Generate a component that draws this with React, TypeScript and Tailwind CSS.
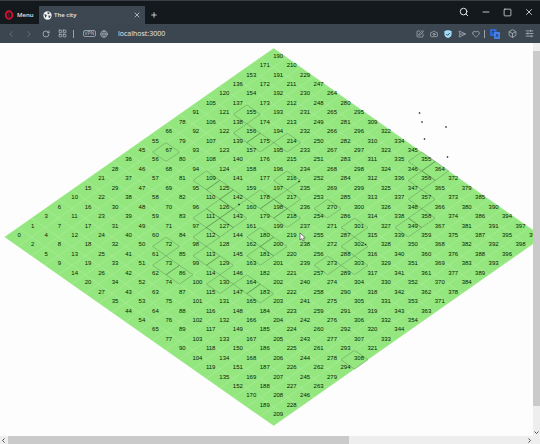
import type { ReactNode } from "react";
import {
  Box,
  Camera,
  ChevronLeft,
  ChevronRight,
  Globe,
  Heart,
  LayoutGrid,
  Minus,
  Plus,
  RotateCw,
  Search,
  SendHorizontal,
  SlidersHorizontal,
  Square,
  SquarePen,
  X,
} from "lucide-react";

const GRID = 20;
const HALF_W = 13.46;
const HALF_H = 9.44;
const ORIGIN_X = 4.5;
const ORIGIN_Y = 194;

type Tile = { id: number; x: number; y: number };

function buildTiles(): Tile[] {
  const tiles: Tile[] = [];
  let id = 0;
  for (let column = 0; column < GRID * 2 - 1; column++) {
    const count = Math.min(column + 1, GRID * 2 - 1 - column);
    for (let row = 0; row < count; row++) {
      tiles.push({
        id: id++,
        x: ORIGIN_X + HALF_W * (column + 1),
        y: ORIGIN_Y + (2 * row - (count - 1)) * HALF_H,
      });
    }
  }
  return tiles;
}

const TILES = buildTiles();

const BUILDINGS = new Set([
  67, 72, 73, 86, 109, 111, 112, 113, 125, 126, 127, 129, 130, 142, 143, 155,
  156, 164, 175, 178, 180, 181, 183, 198, 200, 214, 216, 217, 218, 270, 273,
  301, 302, 303, 308, 349, 355, 356, 357, 358, 364,
]);

const PEOPLE = [
  [419.5, 70],
  [422, 79],
  [446, 84],
  [424.5, 96],
  [447.5, 114],
  [299, 138.5],
  [239, 161.5],
  [365.5, 201.5],
];

function diamond(x: number, y: number) {
  return `M${x - HALF_W} ${y}L${x} ${y - HALF_H}L${x + HALF_W} ${y}L${x} ${y + HALF_H}Z`;
}

function City() {
  const w = HALF_W * GRID;
  const h = HALF_H * GRID;
  return (
    <svg
      className="block h-[390px] w-[560px] max-w-none shrink-0"
      viewBox="0 0 560 390"
      role="img"
      aria-label="City map"
    >
      <path
        d={`M${ORIGIN_X} ${ORIGIN_Y}l${w} ${-h}l${w} ${h}l${-w} ${h}z`}
        fill="#94e77f"
      />
      {TILES.map((t) => (
        <path
          key={t.id}
          d={diamond(t.x, t.y)}
          fill="none"
          stroke="#c4f0b4"
          strokeWidth="0.4"
          strokeOpacity="0.5"
        />
      ))}
      {TILES.filter((t) => BUILDINGS.has(t.id)).map((t) => (
        <path
          key={t.id}
          d={diamond(t.x, t.y)}
          fill="none"
          stroke="#4c8742"
          strokeWidth="0.6"
          strokeOpacity="0.8"
        />
      ))}
      <g
        fontFamily="'Liberation Sans', Arial, sans-serif"
        fontSize="6"
        fill="#0a1c06"
      >
        {TILES.map((t) => (
          <text key={t.id} x={t.x - 0.5} y={t.y}>
            {t.id}
          </text>
        ))}
      </g>
      {PEOPLE.map(([x, y]) => (
        <rect key={`${x}-${y}`} x={x - 0.7} y={y - 0.7} width="1.4" height="1.4" fill="#111" />
      ))}
      <path
        d="M300 190v7l1.8-1.4 1.2 2.4 1.4-.7-1.2-2.2 2-.4z"
        fill="#fff"
        stroke="#333"
        strokeWidth="0.6"
      />
    </svg>
  );
}

function IconButton({ label, children }: { label: string; children: ReactNode }) {
  return (
    <button type="button" aria-label={label} className="flex shrink-0 items-center justify-center">
      {children}
    </button>
  );
}

function TitleBar() {
  return (
    <header className="flex h-6 shrink-0 items-end border-t border-[#3b3e42] bg-[#14191d] text-[#e4e7ea]">
      <button type="button" className="flex h-[18px] w-[39px] shrink-0 items-center gap-[3px] pl-1 text-[6px] font-semibold">
        <svg viewBox="0 0 10 10" className="size-[10px] shrink-0" aria-hidden="true">
          <ellipse cx="5" cy="5" rx="3.3" ry="3.9" fill="none" stroke="#e01035" strokeWidth="1.7" />
          <path d="M5 1.2v7.6" stroke="#8f1028" strokeWidth="1.1" />
        </svg>
        Menu
      </button>
      <div className="flex h-[18px] w-[106px] shrink-0 items-center gap-[2px] bg-[#3c4751] pr-1 pl-1">
        <svg viewBox="0 0 10 10" className="size-[9px] shrink-0" aria-hidden="true">
          <circle cx="5" cy="5" r="4.6" fill="#f3f5f6" />
          <path d="M1.4 3.6l2 .4 1 1.2-1 1.2-.6 1.5zM5 1.2l2.6.8-.8 1.4-1.6.2zM6 5l2.6.4-1.2 2.4-1.2-.6z" fill="#3c4751" />
        </svg>
        <span className="flex-1 text-[6px] font-semibold">The city</span>
        <IconButton label="Close tab"><X size={8} strokeWidth={2} /></IconButton>
      </div>
      <div className="flex h-[18px] w-[17px] items-center justify-center">
        <IconButton label="New tab"><Plus size={8} strokeWidth={2.5} /></IconButton>
      </div>
      <div className="mb-[7px] ml-auto flex items-end gap-3 pr-[6px]">
        <IconButton label="Search tabs"><Search size={10} strokeWidth={2.3} /></IconButton>
        <button type="button" aria-label="Minimize" className="flex h-3 items-end">
          <Minus size={10} strokeWidth={2} />
        </button>
        <IconButton label="Maximize"><Square size={9} strokeWidth={2} /></IconButton>
        <IconButton label="Close window"><X size={10} strokeWidth={2} /></IconButton>
      </div>
    </header>
  );
}

function AddressBar() {
  return (
    <nav className="flex h-[19px] shrink-0 items-center bg-[#3b4650] px-[6px] text-[#b9c0c6]">
      <div className="flex items-center gap-2">
        <span className="text-[#6d7780]"><IconButton label="Back"><ChevronLeft size={10} /></IconButton></span>
        <span className="text-[#6d7780]"><IconButton label="Forward"><ChevronRight size={10} /></IconButton></span>
        <IconButton label="Reload"><RotateCw size={8} strokeWidth={2.3} /></IconButton>
        <IconButton label="Speed dial"><LayoutGrid size={9} strokeWidth={2} /></IconButton>
      </div>
      <span className="ml-[6px] h-2 w-px bg-[#9aa2a9]" />
      <button type="button" className="ml-[9px] flex h-[7px] w-[13px] items-center justify-center rounded-xs border border-[#929ba2] text-[5px]">
        VPN
      </button>
      <Globe size={8} strokeWidth={2} className="ml-1 shrink-0" />
      <input
        aria-label="Address"
        defaultValue="localhost:3000"
        className="ml-[10px] min-w-0 flex-1 bg-transparent text-[7px] leading-3 font-medium text-[#e6e9ec] outline-none"
      />
      <div className="flex items-center gap-[6px]">
        <IconButton label="Edit page"><SquarePen size={8} strokeWidth={2} /></IconButton>
        <IconButton label="Snapshot"><Camera size={8} strokeWidth={2} /></IconButton>
        <IconButton label="Ad blocker">
          <svg viewBox="0 0 8 8" className="size-2">
            <path d="M4 0l3.6 1v3.2C7.6 6.2 6 7.5 4 8 2 7.5.4 6.2.4 4.2V1z" fill="#9fdcf7" />
            <path d="M2.3 4l1.3 1.3L5.8 3" fill="none" stroke="#3b4650" strokeWidth="1" />
          </svg>
        </IconButton>
        <IconButton label="My Flow"><SendHorizontal size={8} strokeWidth={2} /></IconButton>
        <IconButton label="Bookmark"><Heart size={8} strokeWidth={2} /></IconButton>
      </div>
      <span className="ml-1 h-2 w-px bg-[#9aa2a9]" />
      <div className="ml-[5px] flex items-center gap-2">
        <IconButton label="Translate">
          <svg viewBox="0 0 10 10" className="size-[10px]">
            <rect width="6.5" height="7" rx="0.6" fill="#2f68cf" />
            <rect x="4" y="3" width="6" height="7" rx="0.6" fill="#4680e2" />
            <path d="M2 2.5h2.5M3.2 2v3M6 8l1-3 1.2 3" fill="none" stroke="#1c3f86" strokeWidth="0.8" />
          </svg>
        </IconButton>
        <IconButton label="Extensions"><Box size={9} strokeWidth={2} /></IconButton>
        <IconButton label="Easy setup"><SlidersHorizontal size={9} strokeWidth={2} /></IconButton>
      </div>
    </nav>
  );
}

export default function App() {
  return (
    <div className="flex h-screen flex-col overflow-hidden bg-[#fdfdfe] font-['Open_Sans','Noto_Sans',sans-serif]">
      <TitleBar />
      <AddressBar />
      <div className="flex min-h-0 flex-1">
        <main className="min-w-0 flex-1 overflow-hidden">
          <City />
        </main>
        <div className="flex w-[7px] shrink-0 flex-col items-center bg-[#eeeeee] text-[#505050]">
          <div className="h-2 shrink-0" />
          <div className="w-full flex-[355] bg-[#cbcacb]" />
          <div className="flex-[25]" />
          <svg viewBox="0 0 5 3" className="mb-[2px] h-[3px] w-[5px]" aria-hidden="true">
            <path d="M.5.5l2 2 2-2" fill="none" stroke="currentColor" />
          </svg>
        </div>
      </div>
      <div className="flex h-2 shrink-0 items-center bg-[#eeeeee] text-[#505050]">
        <svg viewBox="0 0 3 5" className="mr-[3px] ml-[2px] h-[5px] w-[3px]" aria-hidden="true">
          <path d="M2.5.5l-2 2 2 2" fill="none" stroke="currentColor" />
        </svg>
        <div className="h-full flex-[340] bg-[#cbcacb]" />
        <div className="flex-[179]" />
        <svg viewBox="0 0 3 5" className="mr-[9px] h-[5px] w-[3px]" aria-hidden="true">
          <path d="M.5.5l2 2-2 2" fill="none" stroke="currentColor" />
        </svg>
      </div>
    </div>
  );
}
